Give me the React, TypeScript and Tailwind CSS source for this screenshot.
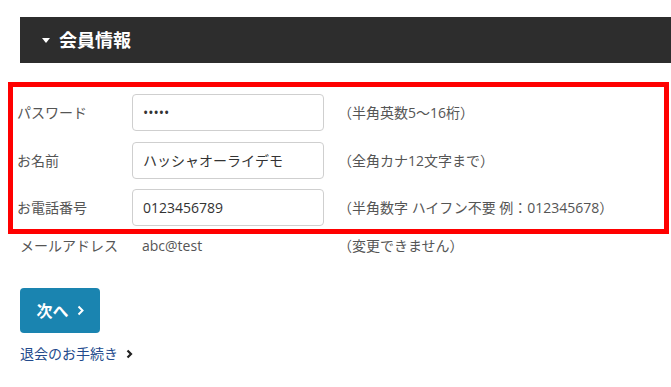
import React from "react";

const font = {
  fontFamily: '"Open Sans", "Noto Sans CJK JP", sans-serif',
};

type Row = {
  label: string;
  value: string;
  hint: string;
  type?: string;
};

const rows: Row[] = [
  { label: "パスワード", value: "12345", hint: "（半角英数5～16桁）", type: "password" },
  { label: "お名前", value: "ハッシャオーライデモ", hint: "（全角カナ12文字まで）" },
  { label: "お電話番号", value: "0123456789", hint: "（半角数字 ハイフン不要 例：012345678）" },
];

function FieldRow({ row }: { row: Row }) {
  return (
    <div className="flex items-center h-[37px]">
      <div className="w-[119px] shrink-0 pl-[4px] text-[14px] text-[#555]">{row.label}</div>
      <input
        readOnly
        type={row.type ?? "text"}
        defaultValue={row.value}
        className="w-[192px] h-[37px] shrink-0 rounded-[4px] border border-[#cfcfcf] px-[10px] text-[14px] text-[#333] outline-none bg-white"
        style={font}
      />
      <div className="ml-[14px] text-[14px] text-[#555]">{row.hint}</div>
    </div>
  );
}

export default function App() {
  return (
    <div className="w-[671px] h-[387px] bg-white overflow-hidden" style={font}>
      {/* section header */}
      <div className="ml-[20px] mt-[17px] h-[46px] bg-[#2d2d2d] flex items-center pl-[22px]">
        <span className="w-0 h-0 border-l-[4px] border-r-[4px] border-t-[5px] border-l-transparent border-r-transparent border-t-white" />
        <span className="ml-[9px] text-[18px] font-bold text-white">会員情報</span>
      </div>

      {/* highlighted fields */}
      <div className="ml-[8px] mr-[2px] mt-[19px] border-[5px] border-[#ff0000] pt-[7px] pb-[3px] flex flex-col gap-[10.5px]">
        {rows.map((r) => (
          <FieldRow key={r.label} row={r} />
        ))}
      </div>

      {/* email (not editable) */}
      <div className="flex items-center h-[22px] mt-[0px] text-[14px]">
        <div className="w-[142px] shrink-0 pl-[20px] text-[#555]">メールアドレス</div>
        <div className="w-[196px] shrink-0 text-[#555]">abc@test</div>
        <div className="text-[#555]">（変更できません）</div>
      </div>

      <button className="ml-[20px] mt-[32px] w-[80px] h-[45px] rounded-[4px] bg-[#1a84b0] text-white flex items-center justify-center gap-[8px]">
        <span className="text-[16px] font-bold">次へ</span>
        <svg width="7" height="11" viewBox="0 0 7 11" fill="none">
          <path d="M1.5 1.5L5.5 5.5L1.5 9.5" stroke="white" strokeWidth="2" />
        </svg>
      </button>

      <div className="ml-[20px] mt-[10px] flex items-center gap-[8px]">
        <span className="text-[14px] text-[#234a8c]">退会のお手続き</span>
        <svg width="7" height="10" viewBox="0 0 7 10" fill="none">
          <path d="M1.5 1.5L5 5L1.5 8.5" stroke="#222" strokeWidth="2.2" />
        </svg>
      </div>
    </div>
  );
}
